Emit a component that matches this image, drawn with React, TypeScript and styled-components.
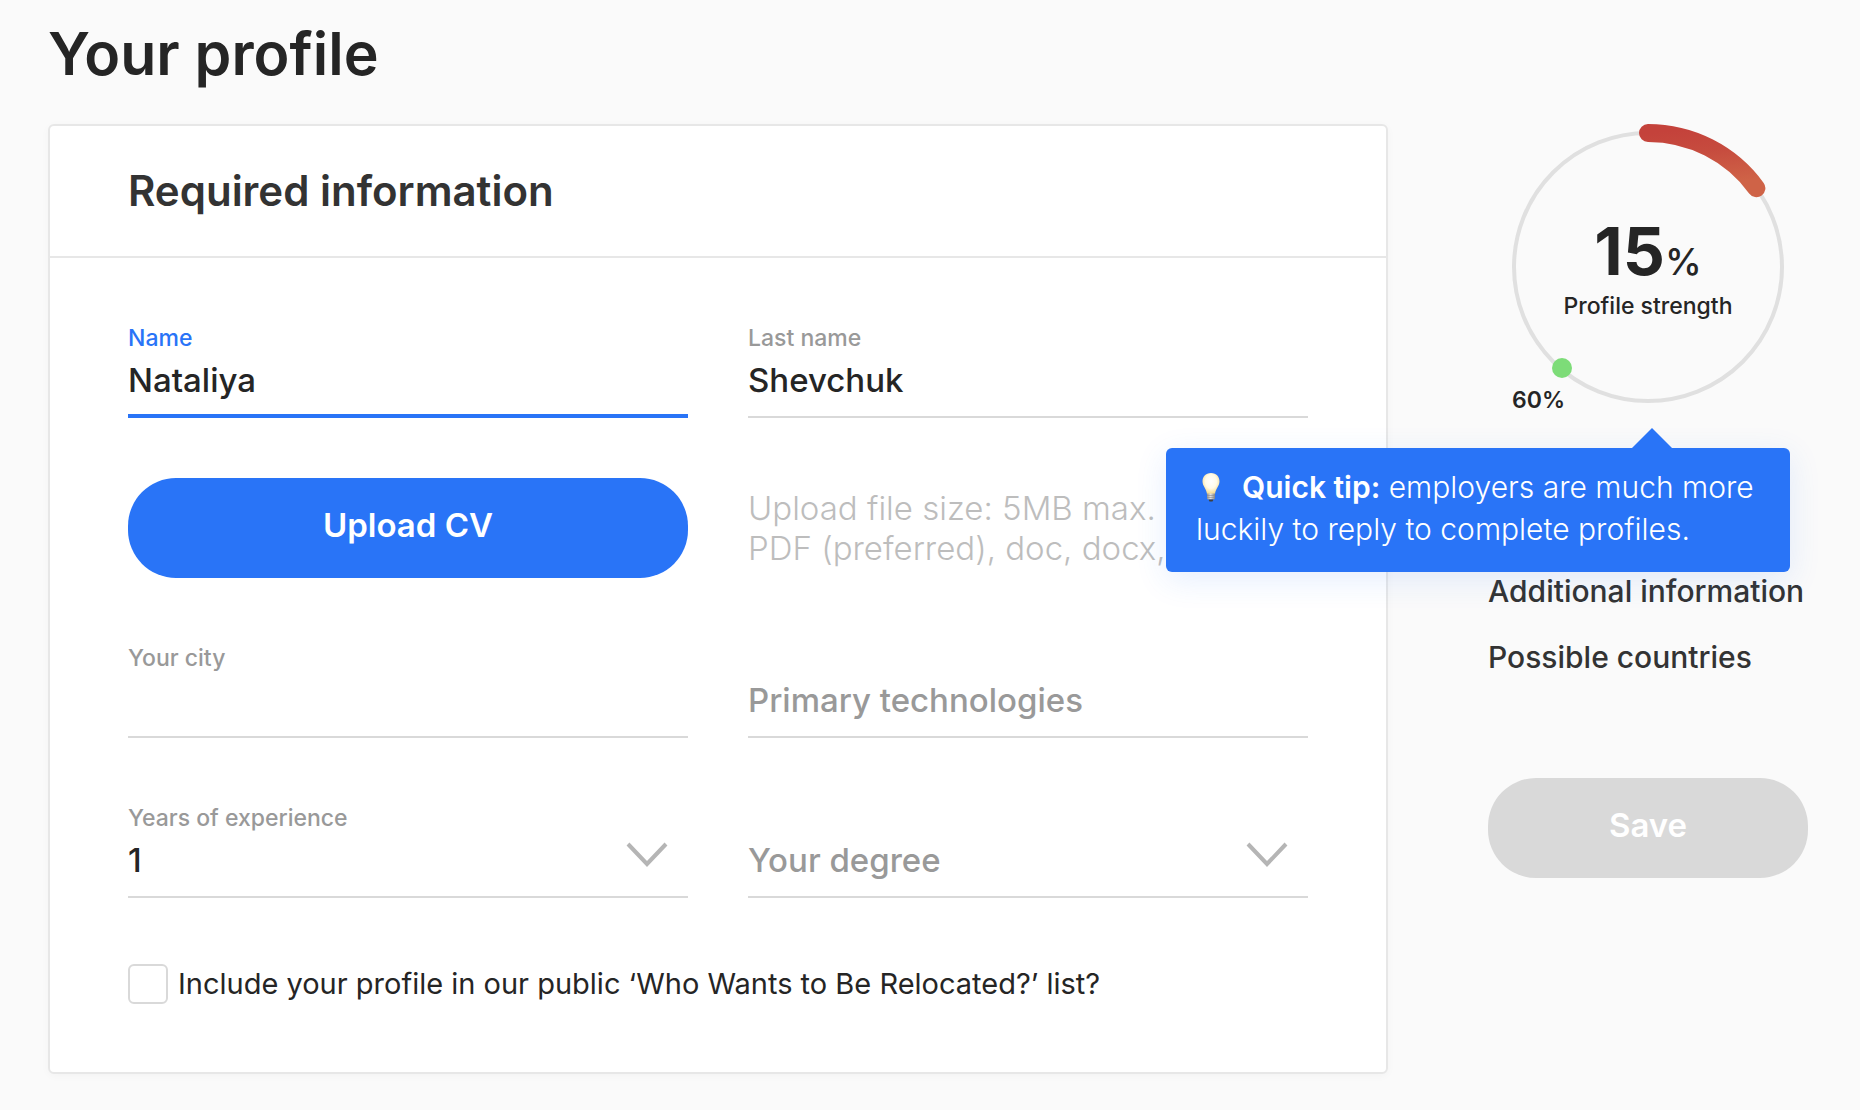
import React from "react";
import styled, { createGlobalStyle } from "styled-components";

const color = {
  page: "#fafafa",
  ink: "#252525",
  heading: "#333333",
  blue: "#2974f7",
  line: "#d9d9d9",
  edge: "#e7e7e7",
  label: "#999999",
  note: "#bdbdbd",
};

const GlobalStyle = createGlobalStyle`
  *, *::before, *::after { box-sizing: border-box; }
  body { margin: 0; background: ${color.page}; }
  body, button, input, select {
    font-family: Inter, "Open Sans", "Liberation Sans", sans-serif;
    color: ${color.ink};
  }
`;

const Page = styled.main`
  padding: 18px 52px 36px 48px;
`;

const Title = styled.h1`
  margin: 0 0 34px;
  font-size: 59px;
  line-height: 72px;
  font-weight: 600;
`;

const Columns = styled.div`
  display: flex;
  align-items: flex-start;
  gap: 100px;
`;

const Card = styled.form`
  flex: 1;
  min-width: 0;
  background: #ffffff;
  border: 2px solid ${color.edge};
  border-radius: 6px;
  box-shadow: 0 2px 8px rgba(0, 0, 0, 0.03);
`;

const CardHeader = styled.header`
  padding: 40px 78px;
  border-bottom: 2px solid ${color.edge};
`;

const CardTitle = styled.h2`
  margin: 0;
  font-size: 42px;
  line-height: 50px;
  font-weight: 600;
  color: ${color.heading};
`;

const CardBody = styled.div`
  padding: 60px 78px 68px;
`;

const Fields = styled.div`
  display: grid;
  grid-template-columns: 1fr 1fr;
  grid-auto-rows: 100px;
  gap: 60px;
  margin-bottom: 66px;
`;

const Field = styled.div`
  position: relative;
  display: flex;
  flex-direction: column;
  justify-content: flex-end;
`;

const Label = styled.label<{ $active?: boolean }>`
  font-size: 23px;
  line-height: 40px;
  font-weight: 500;
  color: ${(p) => (p.$active ? color.blue : color.label)};
`;

const Input = styled.input<{ $active?: boolean }>`
  width: 100%;
  height: 60px;
  padding: 0 0 ${(p) => (p.$active ? 12 : 14)}px;
  border: 0;
  border-bottom: ${(p) => (p.$active ? `4px solid ${color.blue}` : `2px solid ${color.line}`)};
  border-radius: 0;
  outline: none;
  background: transparent;
  font-size: 33px;
  font-weight: 500;

  &::placeholder {
    color: ${color.label};
    opacity: 1;
  }
`;

const Select = styled.select<{ $empty?: boolean }>`
  appearance: none;
  width: 100%;
  height: 60px;
  padding: 0 80px 14px 0;
  border: 0;
  border-bottom: 2px solid ${color.line};
  border-radius: 0;
  outline: none;
  background: transparent;
  font-size: 33px;
  font-weight: 500;
  color: ${(p) => (p.$empty ? color.label : color.ink)};
`;

const Chevron = styled.svg`
  position: absolute;
  right: 20px;
  bottom: 30px;
  pointer-events: none;
`;

const Button = styled.button`
  width: 100%;
  height: 100px;
  padding: 0 20px 6px;
  border: 0;
  border-radius: 48px;
  background: ${color.blue};
  color: #ffffff;
  font-size: 33px;
  font-weight: 600;

  &:disabled {
    background: ${color.line};
  }
`;

const Note = styled.p`
  align-self: center;
  margin: 0;
  font-size: 33px;
  line-height: 40px;
  font-weight: 300;
  color: ${color.note};
`;

const CheckRow = styled.label`
  display: flex;
  gap: 10px;
  font-size: 29px;
  line-height: 40px;
`;

const Checkbox = styled.input`
  appearance: none;
  flex: none;
  width: 40px;
  height: 40px;
  margin: 0;
  border: 2px solid ${color.line};
  border-radius: 6px;
  background: #ffffff;
`;

const Sidebar = styled.aside`
  flex: none;
  width: 320px;
`;

const Gauge = styled.div`
  position: relative;
  display: grid;
  margin-bottom: 130px;

  > * {
    grid-area: 1 / 1;
  }
`;

const GaugeText = styled.div`
  padding-top: 92px;
  text-align: center;
`;

const Score = styled.div`
  font-size: 66px;
  line-height: 70px;
  font-weight: 700;
`;

const Percent = styled.span`
  font-size: 37px;
  line-height: 40px;
  font-weight: 500;
`;

const Caption = styled.div`
  font-size: 23px;
  line-height: 40px;
  font-weight: 500;
`;

const Goal = styled.span`
  position: absolute;
  left: 24px;
  top: 261px;
  font-size: 23px;
  line-height: 30px;
  font-weight: 600;
`;

const Tip = styled.div`
  position: absolute;
  z-index: 1;
  top: 324px;
  right: 18px;
  width: 624px;
  padding: 18px 30px 22px;
  border-radius: 6px;
  background: ${color.blue};
  box-shadow: 0 8px 32px rgba(41, 116, 247, 0.12);
  color: #ffffff;
  font-size: 30px;
  line-height: 42px;
  font-weight: 300;

  &::before {
    content: "";
    position: absolute;
    right: 118px;
    bottom: 100%;
    border: 20px solid transparent;
    border-top-width: 0;
    border-bottom-color: ${color.blue};
  }

  strong {
    font-weight: 600;
  }
`;

const Bulb = styled.svg`
  margin-right: 16px;
  vertical-align: -4px;
`;

const Links = styled.nav`
  display: flex;
  flex-direction: column;
  margin-bottom: 88px;
`;

const SectionLink = styled.a`
  font-size: 30px;
  line-height: 66px;
  font-weight: 500;
  color: ${color.heading};
  text-decoration: none;
  white-space: nowrap;
`;

function Arrow() {
  return (
    <Chevron width="42" height="26" viewBox="0 0 42 26" fill="none" aria-hidden="true">
      <path d="M2 2 L21 22 L40 2" stroke="#b5b5b5" strokeWidth="4" />
    </Chevron>
  );
}

function BulbIcon() {
  return (
    <Bulb width="30" height="30" viewBox="0 0 30 30" aria-hidden="true">
      <defs>
        <radialGradient id="glass" cx="0.5" cy="0.4" r="0.6">
          <stop offset="0" stopColor="#ffffff" />
          <stop offset="0.55" stopColor="#fffbe8" />
          <stop offset="1" stopColor="#f5d98a" />
        </radialGradient>
        <linearGradient id="cap" x1="0" x2="1">
          <stop offset="0" stopColor="#8f8f8f" />
          <stop offset="0.45" stopColor="#e2e2e2" />
          <stop offset="1" stopColor="#858585" />
        </linearGradient>
      </defs>
      <path
        d="M15 1 C9.5 1 6.5 5 6.5 9.500 C6.500 14 10.500 17 11 22 H19 C19.500 17 23.500 14 23.500 9.500 C23.500 5 20.500 1 15 1 Z"
        fill="url(#glass)"
      />
      <path d="M11 21.500 H19 V26 Q19 27.500 17.500 27.500 H12.500 Q11 27.500 11 26 Z" fill="url(#cap)" />
      <path d="M11 23.500 H19 M11 25.500 H19" stroke="#8a8a8a" strokeWidth="0.6" />
      <path d="M12.500 27.500 H17.500 L16.500 29.500 H13.500 Z" fill="#3f3f3f" />
    </Bulb>
  );
}

function Ring() {
  return (
    <svg width="320" height="304" viewBox="0 0 320 304" fill="none" aria-hidden="true">
      <defs>
        <linearGradient id="strength" x1="0" y1="0" x2="0.2" y2="1">
          <stop offset="0" stopColor="#c4423b" />
          <stop offset="0.4" stopColor="#c64b3e" />
          <stop offset="1" stopColor="#cf6347" />
        </linearGradient>
      </defs>
      <circle cx="160" cy="143" r="134" stroke="#e0e0e0" strokeWidth="4" />
      <path
        d="M160 9 A134 134 0 0 1 268.400 64.200"
        stroke="url(#strength)"
        strokeWidth="18"
        strokeLinecap="round"
      />
      <circle cx="74" cy="244" r="10" fill="#7ddc78" />
    </svg>
  );
}

export default function App() {
  return (
    <>
      <GlobalStyle />
      <Page>
        <Title>Your profile</Title>
        <Columns>
          <Card onSubmit={(e) => e.preventDefault()}>
            <CardHeader>
              <CardTitle>Required information</CardTitle>
            </CardHeader>
            <CardBody>
              <Fields>
                <Field>
                  <Label htmlFor="name" $active>Name</Label>
                  <Input id="name" $active defaultValue="Nataliya" />
                </Field>
                <Field>
                  <Label htmlFor="last-name">Last name</Label>
                  <Input id="last-name" defaultValue="Shevchuk" />
                </Field>
                <Button type="button">Upload CV</Button>
                <Note>
                  Upload file size: 5MB max.
                  <br />
                  PDF (preferred), doc, docx,
                </Note>
                <Field>
                  <Label htmlFor="city">Your city</Label>
                  <Input id="city" />
                </Field>
                <Field>
                  <Input aria-label="Primary technologies" placeholder="Primary technologies" />
                </Field>
                <Field>
                  <Label htmlFor="years">Years of experience</Label>
                  <Select id="years" defaultValue="1">
                    <option>1</option>
                  </Select>
                  <Arrow />
                </Field>
                <Field>
                  <Select aria-label="Your degree" $empty defaultValue="">
                    <option value="">Your degree</option>
                  </Select>
                  <Arrow />
                </Field>
              </Fields>
              <CheckRow>
                <Checkbox type="checkbox" />
                Include your profile in our public ‘Who Wants to Be Relocated?’ list?
              </CheckRow>
            </CardBody>
          </Card>
          <Sidebar>
            <Gauge>
              <Ring />
              <GaugeText>
                <Score>
                  15<Percent>%</Percent>
                </Score>
                <Caption>Profile strength</Caption>
              </GaugeText>
              <Goal>60%</Goal>
              <Tip role="note">
                <BulbIcon />
                <strong>Quick tip:</strong> employers are much more luckily to reply to complete profiles.
              </Tip>
            </Gauge>
            <Links>
              <SectionLink href="#additional">Additional information</SectionLink>
              <SectionLink href="#countries">Possible countries</SectionLink>
            </Links>
            <Button type="button" disabled>Save</Button>
          </Sidebar>
        </Columns>
      </Page>
    </>
  );
}
